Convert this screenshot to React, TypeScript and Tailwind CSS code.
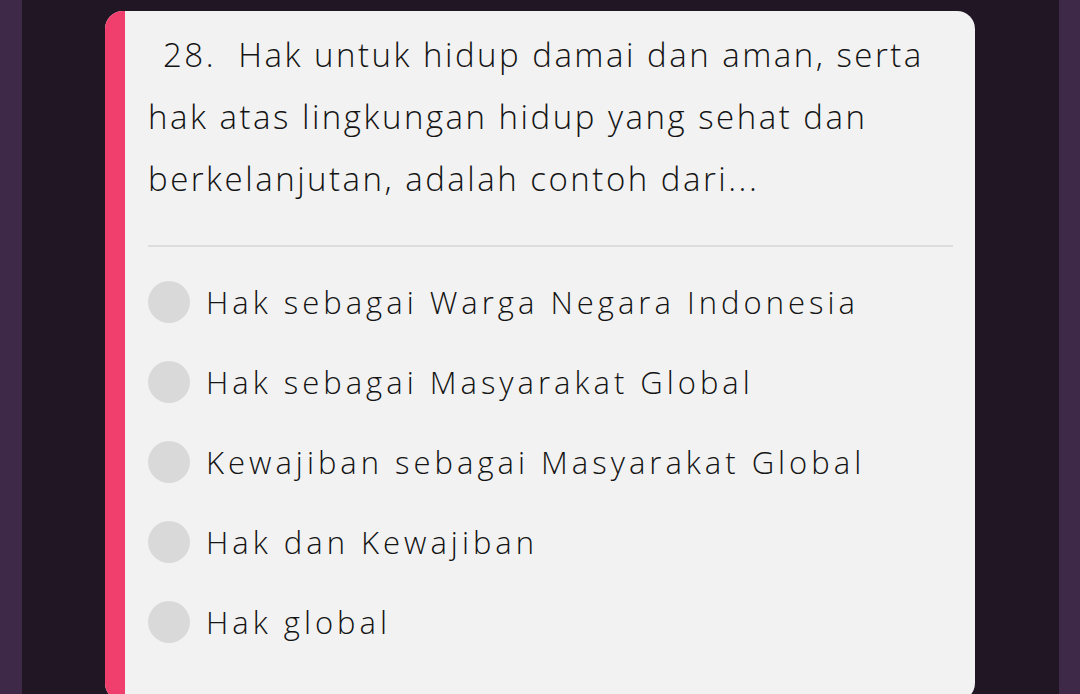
const options = [
  'Hak sebagai Warga Negara Indonesia',
  'Hak sebagai Masyarakat Global',
  'Kewajiban sebagai Masyarakat Global',
  'Hak dan Kewajiban',
  'Hak global',
];

export default function App() {
  return (
    <div className="flex h-[694px] w-[1080px] overflow-hidden bg-[#211623]" style={{ fontFamily: '"Open Sans", "Noto Sans", sans-serif' }}>
      <div className="w-[22px] shrink-0 bg-[#3e2a48]" />
      <div className="flex-1 pl-[83px] pt-[11px]">
        <div className="flex h-[690px] w-[870px] overflow-hidden rounded-[18px] bg-[#f2f2f2]">
          <div className="w-[20px] shrink-0 bg-[#f03f6d]" />
          <div className="flex-1 pl-[23px] pr-[22px] pt-[13px]">
            <p className="whitespace-nowrap text-[33px] font-light leading-[62px] tracking-[2.5px] text-[#141414]">
              <span className="pl-[15px]">28.&nbsp;&nbsp;Hak untuk hidup damai dan aman, serta</span>
              <br />
              hak atas lingkungan hidup yang sehat dan
              <br />
              berkelanjutan, adalah contoh dari...
            </p>
            <div className="mt-[35px] mb-[15px] h-[2px] bg-[#dddddd]" />
            {options.map((o) => (
              <div key={o} className="flex h-[80px] items-center">
                <span className="h-[42px] w-[42px] shrink-0 rounded-full bg-[#d9d9d9]" />
                <span className="ml-[16px] text-[31px] font-light tracking-[4px] text-[#141414]">{o}</span>
              </div>
            ))}
          </div>
        </div>
      </div>
      <div className="w-[21px] shrink-0 bg-[#3e2a48]" />
    </div>
  );
}
